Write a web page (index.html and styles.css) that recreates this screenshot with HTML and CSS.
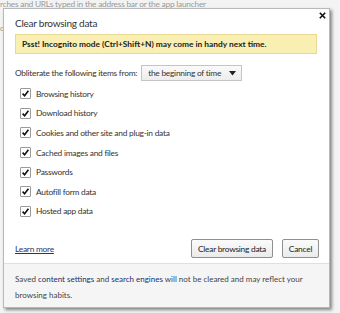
FILE: index.html
```html
<!DOCTYPE html>
<html lang="en">
<head>
    <meta charset="UTF-8">
    <title>Clear browsing data</title>
    <link rel="stylesheet" href="styles.css">
</head>
<body>
    <div class="page">
        <div class="page-line">rches and URLs typed in the address bar or the app launcher</div>
        <div class="page-side">d</div>
    </div>

    <div class="dialog">
        <div class="dialog-body">
            <div class="title-row">
                <h1>Clear browsing data</h1>
                <svg class="close" width="7" height="7" viewBox="0 0 7 7"><path d="M0.8 0.8l5.4 5.4M6.2 0.8l-5.4 5.4" stroke="#111" stroke-width="1.6"/></svg>
            </div>

            <div class="banner">Psst! Incognito mode (Ctrl+Shift+N) may come in handy next time.</div>

            <div class="period">
                <span>Obliterate the following items from:</span>
                <div class="select">
                    <span>the beginning of time</span>
                    <svg width="7" height="5" viewBox="0 0 7 5"><path d="M0 0h7L3.5 4.5z" fill="#222"/></svg>
                </div>
            </div>

            <ul class="items">
                <li><span class="box"><svg width="9" height="9" viewBox="0 0 9 9"><path d="M1.6 4.6l2 2.2 3.8-5" fill="none" stroke="#111" stroke-width="1.6"/></svg></span>Browsing history</li>
                <li><span class="box"><svg width="9" height="9" viewBox="0 0 9 9"><path d="M1.6 4.6l2 2.2 3.8-5" fill="none" stroke="#111" stroke-width="1.6"/></svg></span>Download history</li>
                <li><span class="box"><svg width="9" height="9" viewBox="0 0 9 9"><path d="M1.6 4.6l2 2.2 3.8-5" fill="none" stroke="#111" stroke-width="1.6"/></svg></span>Cookies and other site and plug-in data</li>
                <li><span class="box"><svg width="9" height="9" viewBox="0 0 9 9"><path d="M1.6 4.6l2 2.2 3.8-5" fill="none" stroke="#111" stroke-width="1.6"/></svg></span>Cached images and files</li>
                <li><span class="box"><svg width="9" height="9" viewBox="0 0 9 9"><path d="M1.6 4.6l2 2.2 3.8-5" fill="none" stroke="#111" stroke-width="1.6"/></svg></span>Passwords</li>
                <li><span class="box"><svg width="9" height="9" viewBox="0 0 9 9"><path d="M1.6 4.6l2 2.2 3.8-5" fill="none" stroke="#111" stroke-width="1.6"/></svg></span>Autofill form data</li>
                <li><span class="box"><svg width="9" height="9" viewBox="0 0 9 9"><path d="M1.6 4.6l2 2.2 3.8-5" fill="none" stroke="#111" stroke-width="1.6"/></svg></span>Hosted app data</li>
            </ul>

            <div class="actions">
                <a class="learn" href="#">Learn more</a>
                <div class="buttons">
                    <button class="btn btn-main">Clear browsing data</button>
                    <button class="btn btn-cancel">Cancel</button>
                </div>
            </div>
        </div>

        <div class="footer">
            Saved <a href="#">content settings</a> and <a href="#">search engines</a> will not be cleared and may reflect your<br>browsing habits.
        </div>
    </div>
</body>
</html>
```

FILE: styles.css
```css
body {
    margin: 0;
    font-family: Lato, "Open Sans", sans-serif;
    letter-spacing: -0.25px;
    background-color: #f3f3f3;
    width: 340px;
    height: 313px;
    overflow: hidden;
    position: relative;
}
.page {
    color: #9a9a9a;
    font-size: 8.4px;
}
.page-line {
    margin-top: -1px;
    white-space: nowrap;
}
.page-side {
    margin-top: 14px;
}
.dialog {
    position: absolute;
    left: 3px;
    top: 8px;
    width: 327px;
    height: 300px;
    box-sizing: border-box;
    background-color: white;
    border: 1px solid #b8b8b8;
    box-shadow: 2px 2px 3px rgba(0,0,0,0.45);
    display: flex;
    flex-direction: column;
    color: #333;
}
.dialog-body {
    padding: 0 12px 0 11px;
    flex: 1;
}
.title-row {
    display: flex;
    justify-content: space-between;
    align-items: center;
    height: 25px;
}
h1 {
    margin: 0;
    font-size: 10px;
    font-weight: normal;
    color: #333;
    padding-top: 2px;
}
.close {
    margin-right: -9px;
    margin-top: -12px;
}
.banner {
    background-color: #f9efb3;
    border: 1px solid #ead995;
    font-size: 8.4px;
    font-weight: bold;
    letter-spacing: 0;
    color: #222;
    padding: 3px 6px;
    line-height: 12px;
}
.period {
    display: flex;
    align-items: center;
    gap: 4px;
    font-size: 8.4px;
    margin-top: 11px;
}
.select {
    display: flex;
    align-items: center;
    gap: 8px;
    border: 1px solid #c4c4c4;
    background: linear-gradient(#fafafa, #ededed);
    padding: 0 5px 0 6px;
    height: 14px;
}
.items {
    list-style: none;
    margin: 3px 0 0 0;
    padding: 0 0 0 5px;
    font-size: 8.4px;
}
.items li {
    display: flex;
    align-items: center;
    gap: 5px;
    height: 19.6px;
}
.box {
    width: 9px;
    height: 9px;
    border: 1px solid #9a9a9a;
    border-radius: 1px;
    background-color: white;
    display: flex;
}
.actions {
    display: flex;
    justify-content: space-between;
    align-items: center;
    margin-top: 18px;
}
.learn {
    font-size: 8.4px;
    color: #1f3575;
}
.buttons {
    display: flex;
    gap: 9px;
    margin-right: -2px;
}
.btn {
    font-family: inherit;
    letter-spacing: inherit;
    font-size: 8.4px;
    color: #222;
    background: linear-gradient(#fbfbfb, #ebebeb);
    border: 1px solid #8f8f8f;
    border-radius: 2px;
    height: 19px;
    padding: 0;
}
.btn-main {
    width: 82px;
}
.btn-cancel {
    width: 37px;
}
.footer {
    background-color: #f5f5f5;
    border-top: 1px solid #e0e0e0;
    height: 44px;
    box-sizing: border-box;
    padding: 7px 14px 0 11px;
    font-size: 8px;
    letter-spacing: 0;
    line-height: 16px;
    color: #444;
}
.footer a {
    color: #1a2f6e;
    text-decoration: none;
}
```
